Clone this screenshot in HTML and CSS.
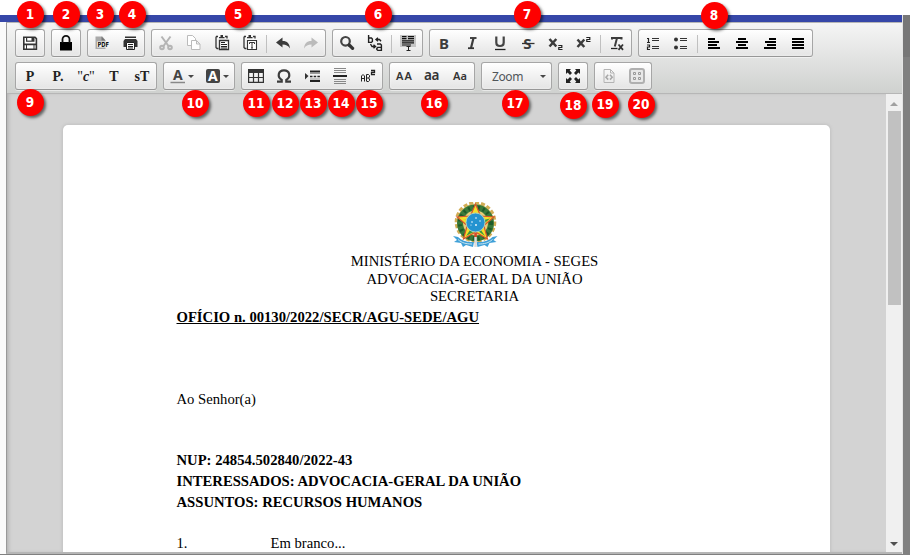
FILE: index.html
```html
<!DOCTYPE html>
<html lang="pt-BR">
<head>
<meta charset="utf-8">
<title>Editor</title>
<link rel="stylesheet" href="styles.css">
</head>
<body>
<div class="topspace"></div>
<div class="frame">
<div class="window">
<div class="bluebar"></div>
<div class="editor">
<div class="toolbar">
<div class="row">
  <div class="group">
    <span class="btn"><svg viewBox="0 0 16 16"><path fill="#fff" stroke="#333" stroke-width="1.600" d="M1.800 2.200H13L14.400 3.600V14.200H1.800Z"/><path fill="#333" d="M4 2h8.500v4.800H4zM2 8.500h12v1.700H2zM4 8.500h1v6H4zM11.500 8.500h1v6h-1z"/><path fill="#fff" d="M5.200 3H9.500v2.600H5.200z"/></svg></span>
  </div>
  <div class="group">
    <span class="btn"><svg viewBox="0 0 16 16"><path fill="#000" d="M2 7h12v8.500H2z"/><path fill="none" stroke="#111" stroke-width="1.800" d="M4.500 8V4.300a3.500 3.500 0 0 1 7 0V8"/></svg></span>
  </div>
  <div class="group">
    <span class="btn"><svg viewBox="0 0 16 16"><path fill="#aaa" d="M1.500 1.500h7l3 4v8.500h-10z"/><path fill="#777" d="M7.500 1.500 11.500 5.500h-4z"/><rect x="3" y="6.500" width="12.500" height="6" fill="#f4f4f4"/><text class="pdf" x="3.500" y="12.200" textLength="11.500" lengthAdjust="spacingAndGlyphs">PDF</text></svg></span>
    <span class="btn"><svg viewBox="0 0 16 16"><path fill="#333" d="M3 1.500h11V3H3zM3 4h11l1.500 2v6h-3V7.500h-8V12H1.500V6z"/><path fill="#fff" stroke="#222" d="M4.500 7.500h8v7h-8z"/><path stroke="#222" d="M6 9.500h5M6 11.500h5M6 13h5"/></svg></span>
  </div>
  <div class="group">
    <span class="btn"><svg viewBox="0 0 16 16"><g fill="none" stroke="#b4b4b4" stroke-width="2"><path d="M3.500 1.500 10.500 11M12.500 1.500 5.500 11"/><circle cx="4" cy="12.500" r="1.800"/><circle cx="12" cy="12.500" r="1.800"/></g></svg></span>
    <span class="btn"><svg viewBox="0 0 16 16"><path fill="#fff" stroke="#bbb" d="M1.500 .5h5l3 3v7h-8z"/><path fill="#fff" stroke="#bbb" d="M5.500 5.500h5l3.500 3.500v5.500H5.500zM10.500 5.500V9H14"/></svg></span>
    <span class="btn"><svg viewBox="0 0 16 16"><path fill="none" stroke="#333" stroke-width="1.300" d="M4 1.500H2.500L2 2.500V12.500l1 1h1.500M11 1.500h2v2"/><path fill="#333" d="M5 2h5.500v1.300H5zM6.500 0h2.500v2H6.500z"/><path fill="#fff" stroke="#333" stroke-width="1.300" d="M5.500 5.500h9v9h-9z"/><path stroke="#222" d="M7 7.500h4M7 9.500h6M7 11.500h6M7 13h6"/></svg></span>
    <span class="btn"><svg viewBox="0 0 16 16"><path fill="none" stroke="#333" stroke-width="1.300" d="M4 1.500H2.500L2 2.500V12.500l1 1h1.500M11 1.500h2v2"/><path fill="#333" d="M5 2h5.500v1.300H5zM6.500 0h2.500v2H6.500z"/><path fill="#fff" stroke="#333" stroke-width="1.100" d="M5.500 5.500h9v9h-9z"/><path fill="none" stroke="#333" d="M7.500 9V7.500h5V9M10 7.500v5.500M9 13h2"/></svg></span>
    <span class="sep"></span>
    <span class="btn"><svg viewBox="0 0 16 16"><path fill="#3c3c3c" d="M1 7.500 7.500 2.500V6c5 0 7 2.500 7.500 7.500C13 10.500 11 9.500 7.500 9.500V12.500z"/></svg></span>
    <span class="btn"><svg viewBox="0 0 16 16"><path fill="#bbb" d="M15 7.500 8.500 2.500V6c-5 0-7 2.500-7.500 7.500C3 10.500 5 9.500 8.500 9.500V12.500z"/></svg></span>
  </div>
  <div class="group">
    <span class="btn"><svg viewBox="0 0 16 16"><circle cx="6.500" cy="6.300" r="4.300" fill="none" stroke="#444" stroke-width="2.200"/><path stroke="#333" stroke-width="3.200" stroke-linecap="round" d="m10.200 10 3.400 3.400"/></svg></span>
    <span class="btn"><svg viewBox="0 0 16 16"><g fill="none" stroke="#222" stroke-width="1.400"><path d="M1.600 0v7.400h2.800l1-1V4L4.400 3H2M10 9h3.400l1 1v5.400h-3.600l-1-1v-1l1-1h3.600M9 4.500h3.500l1.500 1.800M11 2.800 9 4.500l2 1.700M3.500 9l1.500 2.500h2.500M6.500 9.800l2 1.700-2 1.700"/></g></svg></span>
    <span class="sep"></span>
    <span class="btn"><svg viewBox="0 0 16 16"><path fill="#c4c4c4" d="M0 0h16v12H0z"/><path fill="none" stroke="#111" stroke-width="1.200" d="M2 1.600h4.500M8 1.600h6M2 3.700h4.500M8 3.700h6M2 5.800h12M2 7.900h12M2 10h9"/><path fill="none" stroke="#222" d="M8.500 11.500v4M6.500 15.500h4M6.500 11.500h4"/></svg></span>
  </div>
  <div class="group">
    <span class="btn"><svg viewBox="0 0 16 16"><text class="fmt" x="3" y="13.500">B</text></svg></span>
    <span class="btn"><svg viewBox="0 0 16 16"><path fill="none" stroke="#333" stroke-width="1.800" d="M6 3h6.500"/><path fill="none" stroke="#3c3c3c" stroke-width="2.200" d="M9.500 3 7 13"/><path stroke="#333" stroke-width="1.800" d="M4 13.200h6"/></svg></span>
    <span class="btn"><svg viewBox="0 0 16 16"><path fill="none" stroke="#444" stroke-width="2.200" d="M4.300 1.500v6q0 3.500 3.700 3.500T11.700 7.500V1.500"/><path stroke="#222" stroke-width="1.300" d="M3 14.500h10.500"/></svg></span>
    <span class="btn"><svg viewBox="0 0 16 16"><text class="fmt" x="3.300" y="13.500">S</text><path stroke="#333" stroke-width="1.300" d="M2 8.500h12.500"/></svg></span>
    <span class="btn"><svg viewBox="0 0 16 16"><path stroke="#3c3c3c" stroke-width="2.500" d="m1.500 4 6.800 7.500M8.300 4l-6.800 7.500"/><path fill="none" stroke="#222" stroke-width="1.200" d="M10.300 10.500h3.500v2h-3v2H14.500"/></svg></span>
    <span class="btn"><svg viewBox="0 0 16 16"><path stroke="#3c3c3c" stroke-width="2.500" d="m1.500 4.500 6.800 7.500M8.300 4.500l-6.800 7.500"/><path fill="none" stroke="#222" stroke-width="1.200" d="M10.300 2.500h3.500v2h-3v2H14.500"/></svg></span>
    <span class="sep"></span>
    <span class="btn"><svg viewBox="0 0 16 16"><path fill="none" stroke="#3c3c3c" stroke-width="2" d="M3 4.500V3h9.500v1.500M8 3 5.800 11.500"/><path stroke="#222" stroke-width="1.300" d="M2 13.500h6.500"/><path stroke="#333" stroke-width="1.800" d="m9.500 9.500 4.500 5.300M14 9.500l-4.500 5.300"/></svg></span>
  </div>
  <div class="group">
    <span class="btn"><svg viewBox="0 0 16 16"><path fill="none" stroke="#222" stroke-width="1.200" d="M2 3.500h1.500V7.500M2 7.500h3M2 10h2.500v2H2.500v2.500H5"/><path stroke="#333" stroke-width="1.200" d="M7 3.500h7M7 5.500h7M7 11.500h7M7 13.500h7"/></svg></span>
    <span class="btn"><svg viewBox="0 0 16 16"><circle cx="3" cy="4.500" r="2" fill="#333"/><circle cx="3" cy="12.500" r="2" fill="#333"/><path stroke="#333" stroke-width="1.200" d="M7 3.500h7M7 5.500h7M7 11.500h7M7 13.500h7"/></svg></span>
    <span class="sep"></span>
    <span class="btn"><svg viewBox="0 0 16 16"><path fill="#000" d="M2 3h7v2H2zM2 6h11v2H2zM2 9h9v2H2zM2 12h12v2H2z"/></svg></span>
    <span class="btn"><svg viewBox="0 0 16 16"><path fill="#000" d="M4 3h8v2H4zM2 6h12v2H2zM4 9h8v2H4zM2 12h12v2H2z"/></svg></span>
    <span class="btn"><svg viewBox="0 0 16 16"><path fill="#000" d="M7 3h7v2H7zM3 6h11v2H3zM5 9h9v2H5zM2 12h12v2H2z"/></svg></span>
    <span class="btn"><svg viewBox="0 0 16 16"><path fill="#000" d="M2 3h12v2H2zM2 6h12v2H2zM2 9h12v2H2zM2 12h12v2H2z"/></svg></span>
  </div>
</div>
<div class="row">
  <div class="group">
    <span class="btn style">P</span><span class="btn style">P.</span><span class="btn style quote">"<i>c</i>"</span><span class="btn style">T</span><span class="btn style">sT</span>
  </div>
  <div class="group">
    <span class="btn color"><svg viewBox="0 0 16 16"><text class="ca" x="3" y="11.500">A</text><path stroke="#888" stroke-width="1.500" d="M.5 14.500H15"/></svg><b class="arrow"></b></span>
    <span class="btn color"><svg viewBox="0 0 16 16"><rect x="1" y="1" width="14" height="14" rx="2" fill="#444"/><text class="cb" x="3" y="13">A</text></svg><b class="arrow"></b></span>
  </div>
  <div class="group">
    <span class="btn"><svg viewBox="0 0 16 16"><path fill="#333" d="M0 1h16v4H0z"/><path fill="none" stroke="#333" stroke-width="1.200" d="M.6 2v12.400h14.800V2M.6 9.500h14.800M5.500 5v9.500M10.500 5v9.500"/></svg></span>
    <span class="btn"><svg viewBox="0 0 16 16"><path fill="none" stroke="#3c3c3c" stroke-width="2.200" d="M1 13.700h4.700v-1.800C1 9 2 2.300 8 2.300s7 6.700 2.300 9.600v1.800H15"/></svg></span>
    <span class="btn"><svg viewBox="0 0 16 16"><path fill="#333" d="M1 5 4.500 8 1 11.500z"/><path stroke="#222" stroke-width="2" d="M6 3.500h10M6 13h10"/><path stroke="#222" stroke-width="1.400" stroke-dasharray="2.500 1.200" d="M6 8.500h10"/><path stroke="#999" d="M6 5.500h10M6 11h10"/></svg></span>
    <span class="btn"><svg viewBox="0 0 16 16"><path stroke="#888" d="M2 .5h12M2 2.500h12M2 4.500h12M2 11.500h12M2 13.500h12M2 15.500h12"/><path stroke="#222" stroke-width="2" d="M1 8h14"/></svg></span>
    <span class="btn"><svg viewBox="0 0 16 16"><path fill="none" stroke="#222" d="M1.500 13.500V8L3 6.500 4.500 8v5.500M1.500 10.500h3M6.500 13V6.500h2l1 1v1.700l-1 .8 1 .8v1.700l-1 1H6.500M6.500 10H9"/><path fill="none" stroke="#222" stroke-width="1.300" d="M11 2.500h3.500v2h-3v2.200H15"/></svg></span>
  </div>
  <div class="group">
    <span class="btn"><svg viewBox="0 0 16 16"><text class="case" x="0" y="12" font-size="11" textLength="16">AA</text></svg></span>
    <span class="btn"><svg viewBox="0 0 16 16"><text class="case" x="0" y="12" font-size="13.500" textLength="15.500">aa</text></svg></span>
    <span class="btn"><svg viewBox="0 0 16 16"><text class="case" x="1" y="12" font-size="11" textLength="14">Aa</text></svg></span>
  </div>
  <div class="group">
    <span class="zoom"><span>Zoom</span><b class="arrow"></b></span>
  </div>
  <div class="group">
    <span class="btn"><svg viewBox="0 0 16 16"><path fill="#222" d="M1 1h5L4.700 2.500 7 5 5 7 2.600 4.600 1 6zM15 1h-5l1.300 1.500L9 5l2 2 2.400-2.400L15 6zM1 15h5l-1.300-1.500L7 11 5 9l-2.400 2.400L1 10zM15 15h-5l1.300-1.500L9 11l2-2 2.400 2.400L15 10z"/></svg></span>
  </div>
  <div class="group">
    <span class="btn"><svg viewBox="0 0 16 16"><path fill="none" stroke="#b4b4b4" d="M3 1.500h6.500l3.500 3.500v9.500H3zM9.500 1.500V5H13"/><path fill="none" stroke="#a8a8a8" stroke-width="1.600" d="M7.200 6.800 5 9.200l2.200 2.400M9 6.800l2.200 2.400L9 11.600"/></svg></span>
    <span class="btn"><svg viewBox="0 0 16 16"><rect x="1" y="1" width="14" height="14" rx="2" fill="#e8e8e8" stroke="#b0b0b0" stroke-width="2"/><path fill="none" stroke="#999" d="M4.500 4.500h2v2h-2zM9.500 4.500h2v2h-2zM4.500 9.500h2v2h-2zM9.500 9.500h2v2h-2z"/></svg></span>
  </div>
</div>
</div>
<div class="content">
<div class="canvas">
<div class="page">
  <svg class="arms" viewBox="0 0 46 46">
    <circle cx="23.500" cy="20" r="18.500" fill="#e9cd78"/>
    <circle cx="23.500" cy="20" r="19.300" fill="none" stroke="#d2ad55" stroke-width="3" stroke-dasharray="4 2"/>
    <circle cx="23.500" cy="21" r="15.500" fill="none" stroke="#3a7a3a" stroke-width="6"/>
    <circle cx="23.500" cy="21" r="15.500" fill="none" stroke="#1f5a2a" stroke-width="4" stroke-dasharray="2 3"/>
    <path fill="#f5df28" stroke="#d8562c" stroke-width="1.200" d="M23.500 2 28.600 14 42 15 31.800 23.500 35.500 37 23.500 30 11.500 37 15.200 23.500 5 15 18.400 14z"/>
    <path fill="#3c9640" d="M23.500 5v24l-9.500 5 9.500-14L9 16.500l14.500 3zM23.500 20 38 16.500l-7 6zM23.500 20 33 34l-7-5z"/>
    <circle cx="23.500" cy="20.500" r="9.500" fill="#2493d0" stroke="#a8cfc0" stroke-width="1"/>
    <g fill="#fff"><circle cx="24" cy="16" r=".8"/><circle cx="20" cy="20" r=".8"/><circle cx="28" cy="19" r=".7"/><circle cx="24" cy="23" r=".9"/><circle cx="19" cy="23" r=".6"/></g>
    <path fill="#3fa0d8" d="M1 34l5 1c4 4 9 5.500 16 5l-1 5-7-2-3 2-2-4-7-1 3-2zM45.500 34l-5 1c-4 4-9 5.500-16 5l1 5 7-2 3 2 2-4 7-1-3-2z"/>
    <path fill="none" stroke="#c9e5ef" d="M6 37.500c4 3.500 8 4.500 14 4.500M40.500 37.500c-4 3.500-8 4.500-14 4.500"/>
    <path fill="#d84a2c" d="M22.300 31h2.600v4h-2.600z"/><path fill="#ddd" d="M22.300 35h2.500v10h-2.500z"/>
  </svg>
  <div class="head"><div>MINISTÉRIO DA ECONOMIA - SEGES</div><div>ADVOCACIA-GERAL DA UNIÃO</div><div>SECRETARIA</div></div>
  <div class="title">OFÍCIO n. 00130/2022/SECR/AGU-SEDE/AGU</div>
  <div class="to">Ao Senhor(a)</div>
  <div class="meta"><div>NUP: 24854.502840/2022-43</div><div>INTERESSADOS: ADVOCACIA-GERAL DA UNIÃO</div><div>ASSUNTOS: RECURSOS HUMANOS</div></div>
  <div class="para"><span class="num">1.</span><span>Em branco...</span></div>
</div>
</div>
<div class="scroll"><i class="up"></i><div class="thumb"></div><i class="down"></i></div>
</div>
</div>
</div>
<div class="side"></div>
</div>
<div class="badges">
<b style="left:17px;top:1px">1</b><b style="left:53px;top:1px">2</b><b style="left:87px;top:1px">3</b><b style="left:119px;top:1px">4</b><b style="left:225px;top:1px">5</b><b style="left:365px;top:1px">6</b><b style="left:514px;top:1px">7</b><b style="left:701px;top:2px">8</b>
<b style="left:17px;top:89px">9</b><b style="left:182px;top:90px">10</b><b style="left:243px;top:90px">11</b><b style="left:272px;top:90px">12</b><b style="left:300px;top:90px">13</b><b style="left:328px;top:90px">14</b><b style="left:356px;top:90px">15</b><b style="left:421px;top:90px">16</b><b style="left:502px;top:90px">17</b><b style="left:560px;top:92px">18</b><b style="left:592px;top:91px">19</b><b style="left:628px;top:91px">20</b>
</div>
</body>
</html>
```
FILE: styles.css
```css
* { box-sizing: border-box; }
body { margin: 0; width: 910px; height: 555px; overflow: hidden; position: relative; background: #fff; display: flex; flex-direction: column; }
.topspace { height: 15px; }
.frame { flex: 1; display: flex; min-height: 0; border-bottom: 1px solid #808080; }
.window { width: 903px; display: flex; flex-direction: column; background: #fafafa; border-right: 1px solid #e4e4e4; }
.side { flex: 1; background: linear-gradient(#777 42px, #808080 42px); }
.bluebar { height: 7px; background: #3647a8; }
.editor { flex: 1; min-height: 0; margin-left: 6px; display: flex; flex-direction: column; border-left: 1px solid #999; border-top: 1px solid #b6b6b6; border-bottom: 2px solid #b6b6b6; }
.toolbar { height: 71px; padding: 6px 8px 0; border-bottom: 1px solid #b6b6b6; background: linear-gradient(#f5f5f5, #cfd1cf); }
.row { display: flex; gap: 6px; margin-bottom: 5px; }
.group { display: flex; height: 28px; border: 1px solid #a6a6a6; border-bottom-color: #979797; border-radius: 3px; background: linear-gradient(#fff, #e4e4e4); box-shadow: 0 1px 0 rgba(255,255,255,.5), inset 0 0 2px 1px rgba(255,255,255,.3); }
.btn { width: 28px; height: 26px; display: flex; align-items: center; justify-content: center; }
.btn svg { width: 16px; height: 16px; display: block; overflow: visible; }
.sep { width: 1px; height: 18px; margin: 5px 2px 0; background: #c0c0c0; }
.style { font: bold 14px "Liberation Serif", serif; color: #222; padding-top: 2px; }
.quote { font-weight: normal; }
.quote i { font-weight: bold; }
.color { width: 35px; gap: 2px; }
.arrow { width: 0; border: 3px solid transparent; border-top-color: #474747; border-bottom: 0; }
.zoom { width: 69px; display: flex; align-items: center; justify-content: space-between; padding: 0 5px 0 10px; font: 12px "Noto Sans", sans-serif; letter-spacing: -.4px; color: #50565a; }
.pdf { font: bold 7px "DejaVu Sans", sans-serif; fill: #111; }
.fmt { font: bold 15px "Noto Sans", sans-serif; fill: #3c3c3c; }
.ca { font: bold 14px "Noto Sans", sans-serif; fill: #444; }
.cb { font: bold 14px "Noto Sans", sans-serif; fill: #fff; }
.case { font-family: "Noto Sans", sans-serif; font-weight: 600; fill: #333; }
.content { flex: 1; min-height: 0; display: flex; background: #d3d3d3; }
.canvas { flex: 1; overflow: hidden; padding: 31px 0 0 56px; box-shadow: inset 3px 0 4px -2px #aaa; }
.page { width: 767px; height: 600px; padding: 77px 57.500px 0 113.500px; background: #fff; border-radius: 5px; box-shadow: 0 0 3px 1px #c2c2c2; font: 14.67px/21px "Liberation Serif", serif; color: #000; }
.arms { display: block; width: 46px; height: 46px; margin: 0 auto; }
.head { text-align: center; line-height: 17.6px; margin-top: 5px; }
.title { font-weight: bold; text-decoration: underline; margin-top: 1px; }
.to { margin-top: 61px; }
.meta { font-weight: bold; margin-top: 40px; }
.para { margin-top: 20px; display: flex; }
.num { width: 94px; }
.scroll { width: 16px; background: #f0f0f0; display: flex; flex-direction: column; align-items: center; }
.up { margin-top: 8px; border: 4px solid transparent; border-top: 0; border-bottom-color: #a0a0a0; }
.thumb { width: 13px; height: 194px; background: #c1c1c1; margin-top: 5px; }
.down { margin-top: auto; margin-bottom: 6px; border: 4px solid transparent; border-bottom: 0; border-top-color: #505050; }
.badges b { position: absolute; width: 27px; height: 27px; padding-right: 1px; border-radius: 50%; background: #fe0000; color: #fff; text-align: center; font: bold 13.5px/27px "DejaVu Sans Condensed", "DejaVu Sans", sans-serif; box-shadow: 2px 2px 3px rgba(0,0,0,.55); }
```
